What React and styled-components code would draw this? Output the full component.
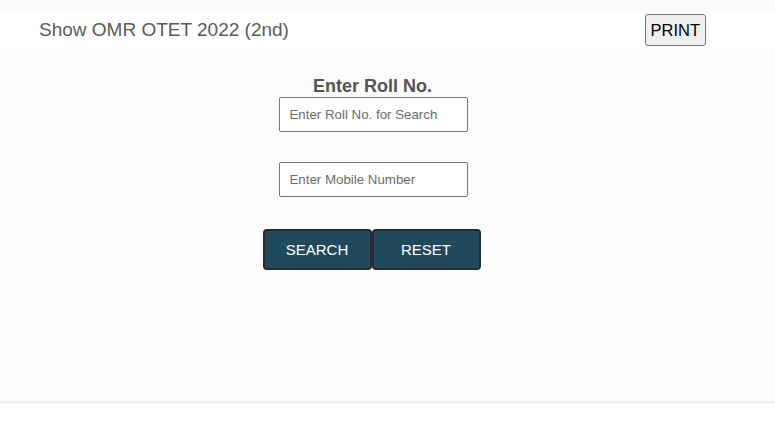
import React, { useState } from 'react';
import styled, { createGlobalStyle } from 'styled-components';

const GlobalStyle = createGlobalStyle`
	body {
		margin: 0;
		background: #ffffff;
		font-family: "Liberation Sans", Arial, sans-serif;
	}
`;

const Page = styled.div`
	width: 775px;
	padding-top: 13px;
	background: #fafafa;
`;

const Header = styled.div`
	height: 33px;
	background: #ffffff;
	display: flex;
	align-items: center;
	justify-content: space-between;
	padding: 0 69px 0 39px;
`;

const Title = styled.h3`
	margin: 0;
	font-size: 19px;
	font-weight: normal;
	color: #5a5a5a;
`;

const PrintButton = styled.button`
	height: 32px;
	padding: 0 5px;
	margin-top: 1px;
	font-family: "Liberation Sans", Arial, sans-serif;
	font-size: 16.5px;
	color: #000;
	background: #efefef;
	border: 1px solid #767676;
	border-radius: 3px;
`;

const Main = styled.div`
	height: 357px;
	background: #fcfcfc;
	border-bottom: 1px solid #e6e6e6;
	display: flex;
	justify-content: center;
	padding-right: 29px;
	box-sizing: border-box;
`;

const SearchForm = styled.form`
	display: flex;
	flex-direction: column;
	align-items: center;
	padding-top: 30px;
`;

const Label = styled.label`
	font-size: 18px;
	font-weight: bold;
	color: #555;
	line-height: 21px;
	margin-left: -1px;
`;

const Field = styled.input`
	width: 189px;
	height: 35px;
	box-sizing: border-box;
	margin-top: ${p => p.gap}px;
	padding: 0 10px;
	font-family: "Liberation Sans", Arial, sans-serif;
	font-size: 13.3px;
	color: #333;
	background: #fff;
	border: 1px solid #767676;
	border-radius: 2px;
	outline: none;

	&::placeholder {
		color: #6b6b6b;
	}
`;

const ButtonRow = styled.div`
	display: flex;
	margin-top: 32px;
	margin-left: -3px;
`;

const ActionButton = styled.button`
	width: 109px;
	height: 41px;
	font-family: "Liberation Sans", Arial, sans-serif;
	font-size: 15px;
	color: #fff;
	background: #214a5e;
	border: 2px solid #2b2b2b;
	border-radius: 4px;
	cursor: pointer;
`;

function App() {
	const [roll, setRoll] = useState('');
	const [mobile, setMobile] = useState('');

	const reset = () => {
		setRoll('');
		setMobile('');
	};

	return (
		<>
			<GlobalStyle />
			<Page>
				<Header>
					<Title>Show OMR OTET 2022 (2nd)</Title>
					<PrintButton onClick={() => window.print()}>PRINT</PrintButton>
				</Header>
				<Main>
					<SearchForm onSubmit={e => e.preventDefault()}>
						<Label>Enter Roll No.</Label>
						<Field
							gap={0}
							placeholder="Enter Roll No. for Search"
							value={roll}
							onChange={e => setRoll(e.target.value)}
						/>
						<Field
							gap={30}
							placeholder="Enter Mobile Number"
							value={mobile}
							onChange={e => setMobile(e.target.value)}
						/>
						<ButtonRow>
							<ActionButton type="submit">SEARCH</ActionButton>
							<ActionButton type="button" onClick={reset}>RESET</ActionButton>
						</ButtonRow>
					</SearchForm>
				</Main>
			</Page>
		</>
	);
}

export default App;
